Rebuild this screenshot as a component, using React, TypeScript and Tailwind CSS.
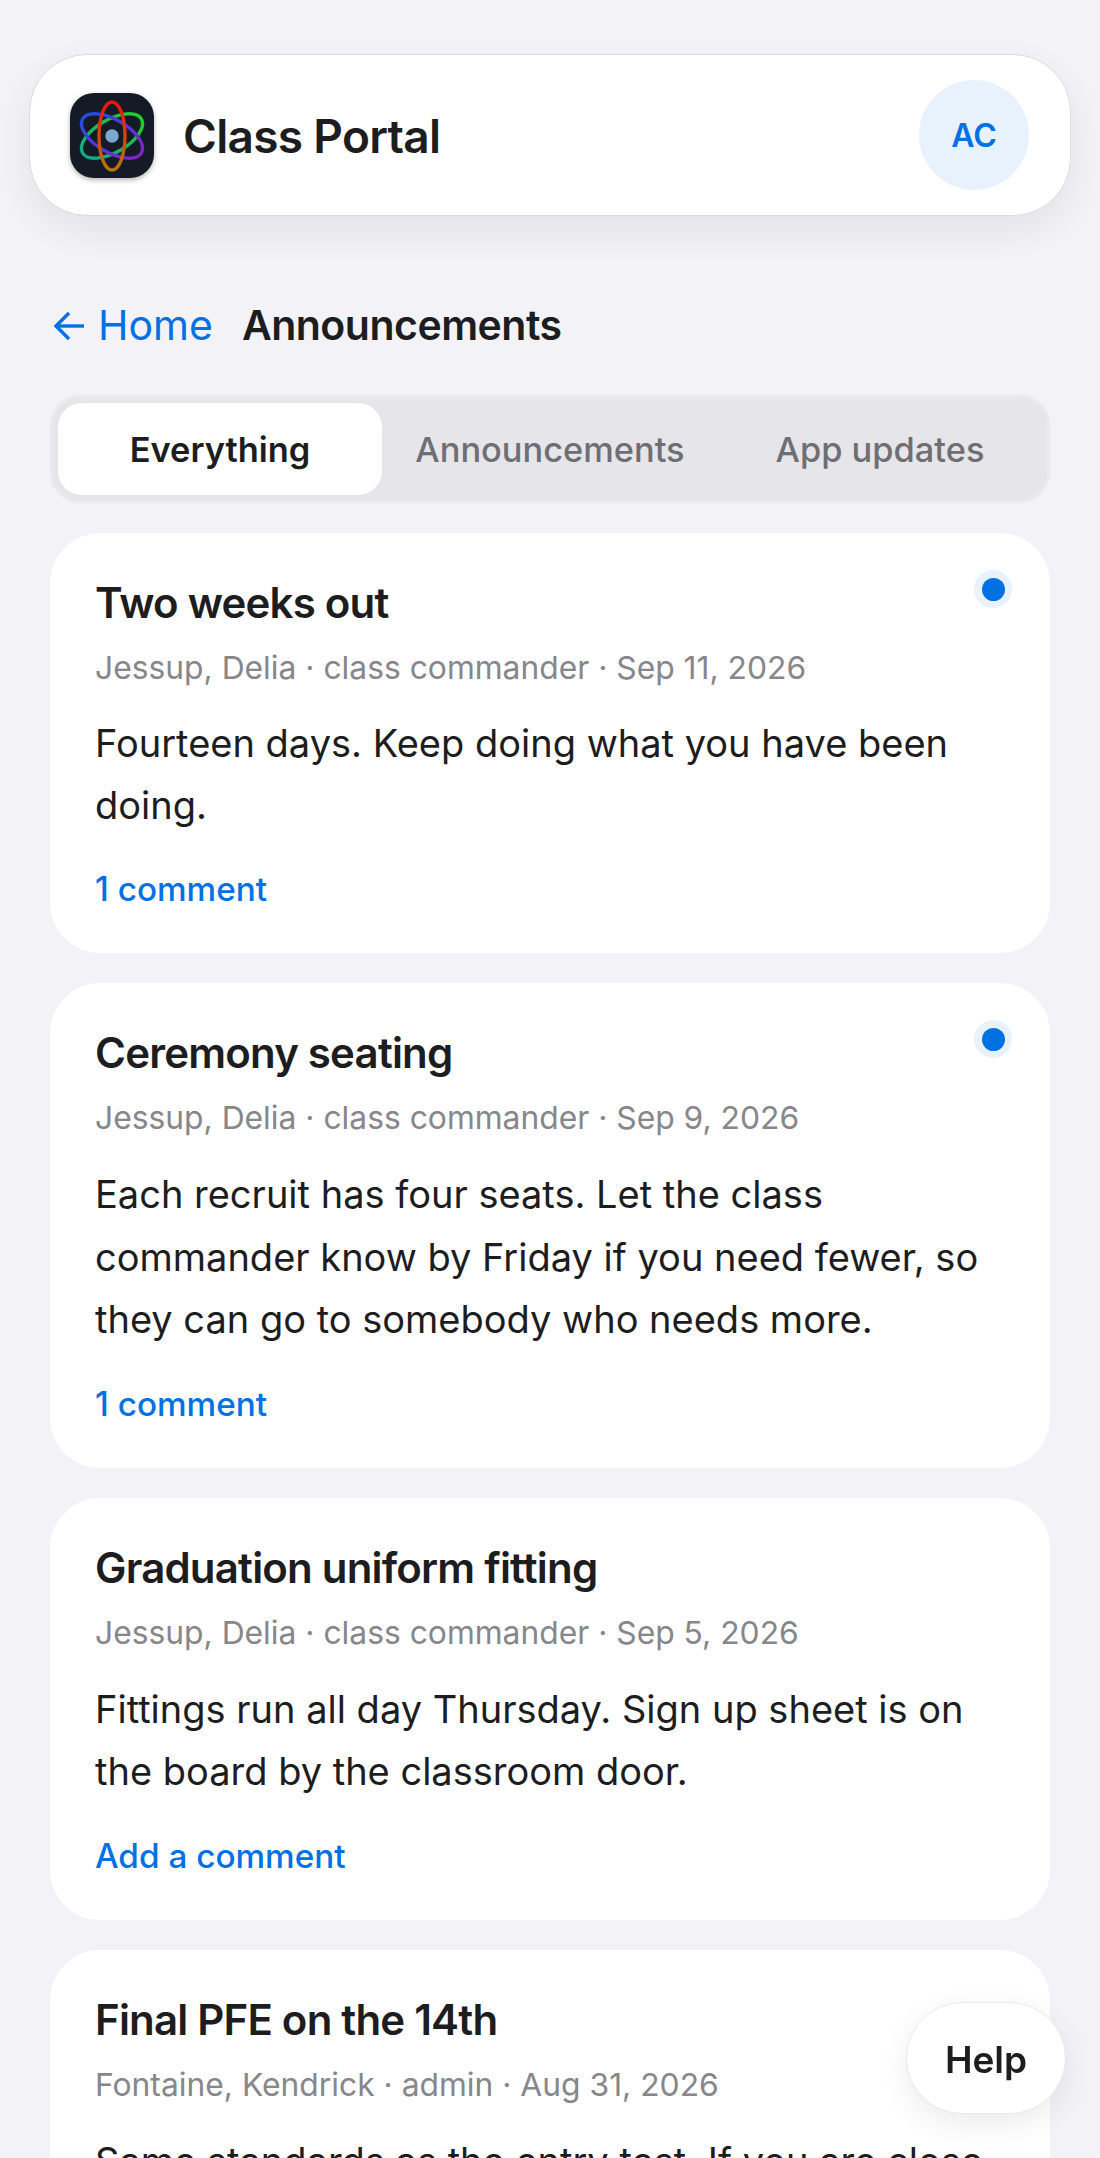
import React from 'react';

interface Post {
  title: string;
  meta: string;
  body: string;
  bodyClass: string;
  link: string;
  unread?: boolean;
}

const posts: Post[] = [
  {
    title: 'Two weeks out',
    meta: 'Jessup, Delia · class commander · Sep 11, 2026',
    body: 'Fourteen days. Keep doing what you have been doing.',
    bodyClass: 'leading-[61.7px]',
    link: '1 comment',
    unread: true,
  },
  {
    title: 'Ceremony seating',
    meta: 'Jessup, Delia · class commander · Sep 9, 2026',
    body: 'Each recruit has four seats. Let the class commander know by Friday if you need fewer, so they can go to somebody who needs more.',
    bodyClass: 'leading-[62.5px]',
    link: '1 comment',
    unread: true,
  },
  {
    title: 'Graduation uniform fitting',
    meta: 'Jessup, Delia · class commander · Sep 5, 2026',
    body: 'Fittings run all day Thursday. Sign up sheet is on the board by the classroom door.',
    bodyClass: 'leading-[62.5px]',
    link: 'Add a comment',
  },
  {
    title: 'Final PFE on the 14th',
    meta: 'Fontaine, Kendrick · admin · Aug 31, 2026',
    body: 'Same standards as the entry test. If you are close to a limit, see your instructor this week.',
    bodyClass: 'leading-[62.5px]',
    link: 'Add a comment',
  },
];

function Logo() {
  return (
    <div className="w-[84px] h-[85px] shrink-0 rounded-[24px] bg-[#141a26] shadow-[0_2px_5px_rgba(0,0,0,0.3)] flex items-center justify-center">
      <svg width="84" height="85" viewBox="0 0 84 85" fill="none">
        <defs>
          <linearGradient id="logoGreen" x1="10" y1="62" x2="74" y2="24" gradientUnits="userSpaceOnUse">
            <stop offset="0" stopColor="#12a595" />
            <stop offset="1" stopColor="#22d31a" />
          </linearGradient>
          <linearGradient id="logoBlue" x1="10" y1="24" x2="74" y2="62" gradientUnits="userSpaceOnUse">
            <stop offset="0" stopColor="#1d4fe8" />
            <stop offset="1" stopColor="#8a1fc0" />
          </linearGradient>
          <linearGradient id="logoRed" x1="42" y1="8" x2="42" y2="78" gradientUnits="userSpaceOnUse">
            <stop offset="0" stopColor="#ee1111" />
            <stop offset="1" stopColor="#b5770c" />
          </linearGradient>
        </defs>
        <ellipse cx="42" cy="43" rx="34" ry="16.5" transform="rotate(-30 42 43)" stroke="url(#logoGreen)" strokeWidth="3.4" />
        <ellipse cx="42" cy="43" rx="34" ry="16.5" transform="rotate(30 42 43)" stroke="url(#logoBlue)" strokeWidth="3.4" />
        <ellipse cx="42" cy="43" rx="13" ry="34" stroke="url(#logoRed)" strokeWidth="3.4" />
        <circle cx="42" cy="43" r="6.7" fill="#7ba8d2" />
      </svg>
    </div>
  );
}

function PostCard({ post }: { post: Post }) {
  return (
    <div className="relative bg-white rounded-[50px] px-[45px] pt-[45px] pb-[42px]">
      {post.unread && (
        <span className="absolute top-[37px] right-[38px] w-[38px] h-[38px] rounded-full bg-[#e8f2fd] flex items-center justify-center">
          <span className="w-[23px] h-[23px] rounded-full bg-[#0071e3]" />
        </span>
      )}
      <h2 className="text-[42px] leading-[50px] font-semibold tracking-[-0.8px] text-[#1d1d1f]">{post.title}</h2>
      <p className="mt-[18px] text-[31.8px] leading-[44px] text-[#86868b]">{post.meta}</p>
      <p className={`mt-[23px] text-[38px] text-[#1d1d1f] ${post.bodyClass}`}>{post.body}</p>
      <p className="mt-[31px] text-[33.3px] leading-[44px] font-medium text-[#0071e3]">{post.link}</p>
    </div>
  );
}

export default function App() {
  return (
    <div className="relative h-screen overflow-hidden bg-[#f2f2f7] font-['Inter',sans-serif]">
      <div className="px-[29px] pt-[54px]">
        <header className="h-[162px] bg-white border border-[#dcdce0] rounded-[58px] pl-[40px] pr-[41px] flex items-center justify-between shadow-[0_14px_36px_rgba(0,0,0,0.07)]">
          <div className="flex items-center gap-[29px]">
            <Logo />
            <span className="pt-[2px] text-[46px] font-semibold tracking-[-0.7px] text-[#1d1d1f]">Class Portal</span>
          </div>
          <div className="w-[110px] h-[110px] rounded-full bg-[#e8f2fd] flex items-center justify-center pt-[1px] text-[32px] font-semibold text-[#0071e3]">
            AC
          </div>
        </header>
      </div>

      <main className="px-[50px] pt-[79px]">
        <div className="flex items-center gap-[29px] h-[62px] pl-[3px]">
          <a className="flex items-center gap-[13px] text-[41px] text-[#0071e3]">
            <svg width="32" height="30" viewBox="0 0 32 30" fill="none" stroke="currentColor" strokeWidth="3.4">
              <path d="M31 15H3" />
              <path d="M16 2L3 15l13 13" />
            </svg>
            <span>Home</span>
          </a>
          <h1 className="text-[41px] font-semibold tracking-[-0.5px] text-[#1d1d1f]">Announcements</h1>
        </div>

        <div className="mt-[38px] h-[108px] bg-[#e5e5ea] border-[3px] border-[#e9e9ee] rounded-[30px] p-[5px] grid grid-cols-3 gap-[6px]">
          <button className="bg-white rounded-[24px] pt-[2px] text-[34.4px] font-semibold text-[#1d1d1f]">Everything</button>
          <button className="pt-[2px] text-[34.4px] font-medium text-[#6e6e73]">Announcements</button>
          <button className="pt-[2px] text-[34.4px] font-medium text-[#6e6e73]">App updates</button>
        </div>

        <div className="mt-[30px] flex flex-col gap-[30px]">
          {posts.map((post) => (
            <PostCard key={post.title} post={post} />
          ))}
        </div>
      </main>

      <button className="fixed right-[34px] bottom-[44px] w-[160px] h-[112px] pt-[3px] rounded-full bg-white border border-[#e8e8ea] text-[37px] font-semibold text-[#1d1d1f] shadow-[0_10px_30px_rgba(0,0,0,0.08)]">
        Help
      </button>
    </div>
  );
}
